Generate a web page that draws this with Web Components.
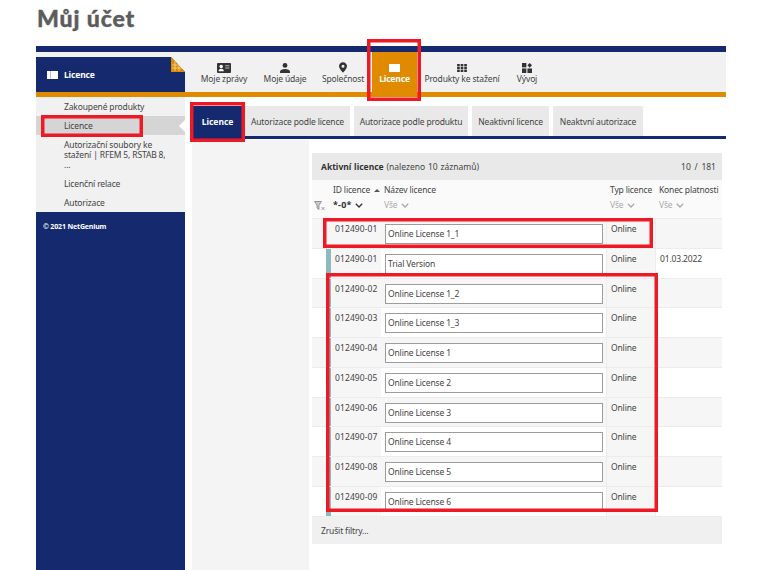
<!DOCTYPE html>
<html lang="cs">
<head>
<meta charset="utf-8">
<title>Můj účet</title>
<style>
  html, body { margin: 0; background: #fff; }
  body { width: 760px; height: 570px; overflow: hidden; position: relative; font-family: "Noto Sans", sans-serif; font-size: 8.5px; letter-spacing: -.15px; color: #444; }
</style>
</head>
<body>
<account-page></account-page>
<script>
const ICONS = {
  card: '<svg width="14" height="10" viewBox="0 0 14 10"><rect width="14" height="10" rx="1" fill="#333"/><circle cx="4.2" cy="3.5" r="1.7" fill="#fff"/><path d="M1.6 8.2c0-1.7 1.2-2.4 2.6-2.4s2.6.7 2.6 2.4z" fill="#fff"/><path d="M8.2 2.2h4.2v1H8.2zM8.2 4.4h4.2v1H8.2z" fill="#bbb"/></svg>',
  user: '<svg width="10" height="10" viewBox="0 0 10 10"><circle cx="5" cy="2.4" r="2.4" fill="#333"/><path d="M0 10V8.6C0 7 2.4 6 5 6s5 1 5 2.6V10z" fill="#333"/></svg>',
  pin: '<svg width="8" height="11" viewBox="0 0 9 12"><path fill-rule="evenodd" d="M4.5 0C2 0 0 2 0 4.4 0 7.4 4.5 12 4.5 12S9 7.4 9 4.4C9 2 7 0 4.5 0zm0 2.8a1.7 1.7 0 1 1 0 3.4 1.7 1.7 0 0 1 0-3.4z" fill="#333"/></svg>',
  lic: '<svg width="11" height="8" viewBox="0 0 11 8"><rect width="11" height="8" fill="#fff"/><rect x="3" width=".8" height="8" fill="currentColor" opacity=".35"/></svg>',
  grid: '<svg width="10" height="8" viewBox="0 0 11 9"><g fill="#333"><rect width="3" height="2.6"/><rect x="4" width="3" height="2.6"/><rect x="8" width="3" height="2.6"/><rect y="3.2" width="3" height="2.6"/><rect x="4" y="3.2" width="3" height="2.6"/><rect x="8" y="3.2" width="3" height="2.6"/><rect y="6.4" width="3" height="2.6"/><rect x="4" y="6.4" width="3" height="2.6"/><rect x="8" y="6.4" width="3" height="2.6"/></g></svg>',
  dev: '<svg width="10" height="10" viewBox="0 0 11 11"><g fill="#333"><rect width="4.8" height="4.8"/><rect y="6" width="4.8" height="5"/><rect x="6" y="6" width="5" height="5"/><path d="M8.5 0l2.5 2.6-2.5 2.6L6 2.6z"/></g></svg>',
  chev: '<svg width="8" height="5" viewBox="0 0 8 5"><path d="M.8 .8l3.2 3.2L7.2 .8" fill="none" stroke="currentColor" stroke-width="1.3"/></svg>'
};

class NavItem extends HTMLElement {
  connectedCallback() {
    const root = this.attachShadow({ mode: "open" });
    root.innerHTML = `
      <style>
        :host { display: flex; flex-direction: column; align-items: center; box-sizing: border-box; height: 40px; padding: 10px 0 0; color: #444; width: var(--w); margin-left: var(--ml, 0); }
        :host([active]) { background: #e08a00; color: #fff; font-weight: 700; }
        .i { height: 11px; display: flex; align-items: center; justify-content: center; }
        .t { line-height: 12px; white-space: nowrap; }
      </style>
      <div class="i">${ICONS[this.getAttribute("icon")]}</div>
      <div class="t"><slot></slot></div>`;
  }
}
customElements.define("nav-item", NavItem);

class TopNav extends HTMLElement {
  connectedCallback() {
    const root = this.attachShadow({ mode: "open" });
    root.innerHTML = `
      <style>
        :host { display: flex; height: 40px; background: #f1f1f1; }
        nav-item:nth-of-type(1) { --w: 50px; --ml: 14px; }
        nav-item:nth-of-type(2) { --w: 50px; --ml: 11px; }
        nav-item:nth-of-type(3) { --w: 50px; --ml: 8px; }
        nav-item:nth-of-type(4) { --w: 45px; --ml: 4px; }
        nav-item:nth-of-type(5) { --w: 80px; --ml: 5px; }
        nav-item:nth-of-type(6) { --w: 30px; --ml: 10px; }
      </style>
      <nav-item icon="card">Moje zprávy</nav-item>
      <nav-item icon="user">Moje údaje</nav-item>
      <nav-item icon="pin">Společnost</nav-item>
      <nav-item icon="lic" active>Licence</nav-item>
      <nav-item icon="grid">Produkty ke stažení</nav-item>
      <nav-item icon="dev">Vývoj</nav-item>`;
  }
}
customElements.define("top-nav", TopNav);

class SideMenu extends HTMLElement {
  connectedCallback() {
    const root = this.attachShadow({ mode: "open" });
    root.innerHTML = `
      <style>
        :host { display: flex; flex-direction: column; width: 149px; background: #15296f; }
        .head { height: 40px; background: #f1f1f1; display: flex; flex-direction: column; justify-content: flex-end; }
        .title { position: relative; height: 35px; background: #15296f; color: #fff; font-weight: 700; display: flex; align-items: center; gap: 6px; padding-left: 11px; box-sizing: border-box; }
        .title svg.fold { position: absolute; right: 0; top: 0; }
        .bar { height: 5px; background: #e08a00; }
        ul { list-style: none; margin: 0; padding: 0; background: #f1f1f1; }
        li { padding: 5px 16px 4px 28px; line-height: 10px; position: relative; }
        li.sel { background: #d5d5d5; }
        li.sel::after { content: ""; position: absolute; right: 0; top: 4px; border: 6px solid transparent; border-right-color: #fff; border-left-width: 0; }
        .copy { color: #fff; font-size: 7px; font-weight: 700; padding: 10px 0 0 7px; line-height: 10px; }
      </style>
      <div class="head">
        <div class="title">
          <span style="display:flex;color:#15296f">${ICONS.lic}</span><span>Licence</span>
          <svg class="fold" width="14" height="15" viewBox="0 0 14 15"><path d="M0 0h14v15z" fill="#f1f1f1"/><path d="M0 0l14 15H0z" fill="#e08a00"/><path d="M4 4v10M8 8.5v5.5M1 8h7M1 11h10" stroke="#f3d9a8" stroke-width=".8"/></svg>
        </div>
      </div>
      <div class="bar"></div>
      <ul>
        <li>Zakoupené produkty</li>
        <li class="sel">Licence</li>
        <li>Autorizační soubory ke stažení | RFEM 5, RSTAB 8, ...</li>
        <li>Licenční relace</li>
        <li>Autorizace</li>
      </ul>
      <div class="copy">© 2021 NetGenium</div>`;
  }
}
customElements.define("side-menu", SideMenu);

class TabBar extends HTMLElement {
  connectedCallback() {
    const root = this.attachShadow({ mode: "open" });
    root.innerHTML = `
      <style>
        :host { display: flex; height: 33px; box-sizing: border-box; border-bottom: 3px solid #15296f; gap: 4px; color: #444; }
        div { height: 30px; background: #e9e9e9; display: flex; align-items: center; justify-content: center; box-sizing: border-box; white-space: nowrap; }
        .on { width: 51px; margin-right: -2px; background: #15296f; color: #fff; font-weight: 700; letter-spacing: 0; }
      </style>
      <div class="on">Licence</div>
      <div style="width:105px">Autorizace podle licence</div>
      <div style="width:114px">Autorizace podle produktu</div>
      <div style="width:77px">Neaktivní licence</div>
      <div style="width:90px">Neaktvní autorizace</div>`;
  }
}
customElements.define("tab-bar", TabBar);

class LicRow extends HTMLElement {
  connectedCallback() {
    const root = this.attachShadow({ mode: "open" });
    const shade = this.hasAttribute("shade");
    root.innerHTML = `
      <style>
        :host { display: grid; grid-template-columns: 14px 5px 50px 225px 50px 66px; height: 29.75px; box-sizing: border-box; border-bottom: 1px solid #ececec; background: ${shade ? "#f6f6f6" : "#fff"}; overflow: hidden; }
        .strip { background: #8db9c1; grid-column: 2; }
        :host([nostrip]) .strip { background: none; }
        .id, .typ, .end { padding: 4px 0 0 4px; line-height: 12px; }
        .id { background: #f6f6f6; letter-spacing: .1px; }
        .typ { background: #f6f6f6; border-left: 1px solid #ececec; border-right: 1px solid #ececec; }
        .name { padding: 5px 3px 0 4px; }
        .name span { display: block; height: 20px; box-sizing: border-box; border: 1px solid #9c9c9c; background: #fff; padding: 3px 0 0 2px; line-height: 12px; }
      </style>
      <div></div><div class="strip"></div>
      <div class="id">${this.getAttribute("lic")}</div>
      <div class="name"><span><slot></slot></span></div>
      <div class="typ">Online</div>
      <div class="end">${this.getAttribute("end") || ""}</div>`;
  }
}
customElements.define("lic-row", LicRow);

class LicTable extends HTMLElement {
  connectedCallback() {
    const root = this.attachShadow({ mode: "open" });
    const rows = [["012490-01","Online License 1_1",""],["012490-01","Trial Version","01.03.2022"],["012490-02","Online License 1_2",""],["012490-03","Online License 1_3",""],["012490-04","Online License 1",""],["012490-05","Online License 2",""],["012490-06","Online License 3",""],["012490-07","Online License 4",""],["012490-08","Online License 5",""],["012490-09","Online License 6",""]];
    root.innerHTML = `
      <style>
        :host { display: block; width: 410px; }
        .cap { height: 27px; background: #e9e9e9; display: flex; align-items: center; justify-content: space-between; padding: 0 6px 0 9px; letter-spacing: 0; word-spacing: .6px; }
        .cap b { color: #333; }
        .cap span:last-child { word-spacing: 1.5px; }
        .hd { display: grid; grid-template-columns: 18px 51px 226px 49px 66px; height: 39px; box-sizing: border-box; border-bottom: 1px solid #ececec; background: #fafafa; line-height: 12px; white-space: nowrap; }
        .hd > div { padding-top: 4px; }
        .hd small { display: flex; align-items: center; gap: 3px; font-size: inherit; color: #aaa; margin-top: 3px; }
        .hd small.dark { color: #333; font-weight: 700; font-size: 9px; letter-spacing: .2px; }
        .hd .f { display: flex; align-items: flex-end; padding: 0 0 7px 2px; }
        .hd .c { padding-left: 3px; }
        .foot { height: 27px; background: #f0f0f0; display: flex; align-items: center; padding-left: 9px; }
        .sort { display: inline-block; border: 3px solid transparent; border-bottom: 3px solid #555; border-top-width: 0; margin-left: 2px; vertical-align: middle; }
      </style>
      <div class="cap"><span><b>Aktivní licence</b> (nalezeno 10 záznamů)</span><span>10 / 181</span></div>
      <div class="hd">
        <div class="f"><svg width="11" height="10" viewBox="0 0 11 10"><path d="M.5.5h7L5 4v4.5L3 7V4z" fill="#ccc" stroke="#777" stroke-width=".7"/><path d="M7.5 6l3 3M10.5 6l-3 3" stroke="#777" stroke-width=".7"/></svg></div>
        <div class="c">ID licence <i class="sort"></i><small class="dark">*-0* ${ICONS.chev}</small></div>
        <div class="c">Název licence<small>Vše ${ICONS.chev}</small></div>
        <div class="c">Typ licence<small>Vše ${ICONS.chev}</small></div>
        <div class="c">Konec platnosti<small>Vše ${ICONS.chev}</small></div>
      </div>
      ${rows.map((r, i) => `<lic-row lic="${r[0]}" end="${r[2]}" ${i % 2 ? "" : "shade"} ${i ? "" : "nostrip"}>${r[1]}</lic-row>`).join("")}
      <div class="foot">Zrušit filtry...</div>`;
  }
}
customElements.define("lic-table", LicTable);

class RedMark extends HTMLElement {
  connectedCallback() {
    const root = this.attachShadow({ mode: "open" });
    const [x, y, w, h] = this.getAttribute("box").split(",");
    root.innerHTML = `<style>:host { position: absolute; display: block; box-sizing: border-box; box-shadow: inset 0 0 0 3.5px #ed1a25; left: ${x}px; top: ${y}px; width: ${w}px; height: ${h}px; }</style>`;
  }
}
customElements.define("red-mark", RedMark);

class AccountPage extends HTMLElement {
  connectedCallback() {
    const root = this.attachShadow({ mode: "open" });
    root.innerHTML = `
      <style>
        :host { display: block; padding: 5px 34px 0 36px; height: 565px; }
        h1 { margin: 0 0 0 1px; font: 900 23px/26px Lato, sans-serif; letter-spacing: .9px; color: #5c5c5c; -webkit-text-stroke: .4px #5c5c5c; height: 41px; }
        .rule { height: 6px; background: #15296f; }
        .shell { display: grid; grid-template-columns: 149px 1fr; height: 518px; }
        .main { display: flex; flex-direction: column; min-width: 0; }
        .orange { height: 5px; background: #e08a00; }
        .content { display: flex; flex-direction: column; padding: 9px 0 0 7px; flex: 1; min-height: 0; }
        .body { display: grid; grid-template-columns: 117px 410px; gap: 3px; flex: 1; min-height: 0; margin-top: 1px; }
        .pad { background: #f4f4f4; }
        .tbl { padding-top: 13px; }
      </style>
      <h1>Můj účet</h1>
      <div class="rule"></div>
      <div class="shell">
        <side-menu></side-menu>
        <div class="main">
          <top-nav></top-nav>
          <div class="orange"></div>
          <div class="content">
            <tab-bar></tab-bar>
            <div class="body">
              <div class="pad"></div>
              <div class="tbl"><lic-table></lic-table></div>
            </div>
          </div>
        </div>
      </div>
      <red-mark box="367,39,54,62"></red-mark>
      <red-mark box="41,115,102,22"></red-mark>
      <red-mark box="190,102,55,40"></red-mark>
      <red-mark box="323,218,330,30"></red-mark>
      <red-mark box="326,273,332,239"></red-mark>`;
  }
}
customElements.define("account-page", AccountPage);
</script>
</body>
</html>
